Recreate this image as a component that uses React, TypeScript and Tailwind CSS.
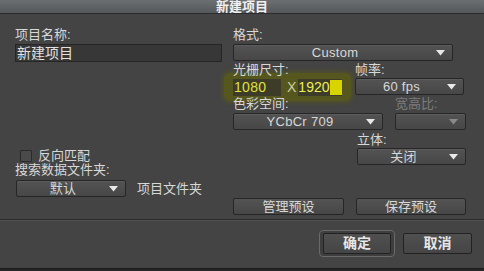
import React from "react";

const FONT = { fontFamily: '"Liberation Sans", "Noto Sans CJK SC", sans-serif' };

function Arrow({ dim = false }: { dim?: boolean }) {
  return (
    <svg width="9" height="6" viewBox="0 0 9 6" className="shrink-0">
      <path d="M0 0 H9 L4.5 5.5 Z" fill={dim ? "#8a8a8a" : "#e8e8e8"} />
    </svg>
  );
}

function Select({ text, w, dim = false }: { text?: string; w: string; dim?: boolean }) {
  return (
    <div
      className={`${w} h-[17px] flex items-center rounded-[2px] border border-[#262626] bg-gradient-to-b from-[#535353] to-[#474747] shadow-[inset_0_1px_0_#5c5c5c] pr-[7px]`}
    >
      <span className="flex-1 text-center text-[13px] leading-[15px] text-[#d8d8d8] tracking-[0.3px]">{text}</span>
      <Arrow dim={dim} />
    </div>
  );
}

function Label({ children, dim = false, className = "" }: { children: React.ReactNode; dim?: boolean; className?: string }) {
  return (
    <div className={`text-[13px] leading-[16px] ${dim ? "text-[#7c7c7c]" : "text-[#d8d8d8]"} ${className}`}>{children}</div>
  );
}

function Btn({ text, w }: { text: string; w: string }) {
  return (
    <div
      className={`${w} h-[17px] flex items-center justify-center rounded-[2px] border border-[#262626] bg-gradient-to-b from-[#535353] to-[#474747] text-[13px] leading-[15px] text-[#d8d8d8]`}
    >
      {text}
    </div>
  );
}

export default function App() {
  return (
    <div className="w-[484px] h-[271px] bg-[#444444] flex flex-col overflow-hidden" style={FONT}>
      {/* title bar */}
      <div className="h-[14px] shrink-0 bg-gradient-to-b from-[#6c6f72] to-[#55585b] border-b border-[#2c2c2c] flex items-center justify-center">
        <span className="text-[13px] leading-[13px] font-bold text-[#f0f0f0]">新建项目</span>
      </div>

      {/* body */}
      <div className="flex h-[205px] shrink-0">
        {/* left column */}
        <div className="w-[233px] shrink-0 pl-[15px] pt-[13px] flex flex-col">
          <Label>项目名称:</Label>
          <div className="mt-[1px] w-[207px] h-[18px] bg-[#373737] border border-[#262626] flex items-center pl-[1px]">
            <span className="text-[14px] leading-[16px] text-[#e2e2e2]">新建项目</span>
          </div>
          <div className="mt-[86px] flex items-center pl-[5px] gap-[6px]">
            <div className="w-[12px] h-[12px] bg-[#4a4a4a] border border-[#2a2a2a] rounded-[1px]" />
            <Label>反向匹配</Label>
          </div>
          <Label className="-mt-[2px]">搜索数据文件夹:</Label>
          <div className="mt-[2px] ml-[1px] flex items-center gap-[11px]">
            <Select text="默认" w="w-[110px]" />
            <Label>项目文件夹</Label>
          </div>
        </div>

        {/* right column */}
        <div className="w-[233px] shrink-0 pt-[13px] flex flex-col">
          <Label>格式:</Label>
          <div className="mt-[1px]">
            <Select text="Custom" w="w-[220px]" />
          </div>

          <div className="flex mt-[1px]">
            <div className="w-[122px] shrink-0 flex flex-col">
              <Label className="relative z-10">光栅尺寸:</Label>
              <div className="-ml-[9px] -mt-[5px] -mb-[6px] w-[127px] h-[28px] rounded-[6px] bg-[#56561f] shadow-[0_0_4px_2px_rgba(86,86,31,0.7)] flex items-center pl-[9px]">
                <div className="w-[48px] h-[17px] bg-[#3c3c28] flex items-center pl-[1px]">
                  <span className="text-[14px] leading-[16px] text-[#e0e03a] tracking-[0.3px]">1080</span>
                </div>
                <span className="ml-[6px] text-[14px] leading-[16px] text-[#cfcf9a]">X</span>
                <div className="ml-[2px] h-[17px] bg-[#3c3c28] flex items-center">
                  <span className="text-[14px] leading-[16px] text-[#efef50]">1920</span>
                  <div className="w-[12px] h-[15px] bg-[#d8d400]" />
                </div>
              </div>
            </div>
            <div className="flex flex-col">
              <Label>帧率:</Label>
              <div>
                <Select text="60 fps" w="w-[109px]" />
              </div>
            </div>
          </div>

          <div className="flex mt-[1px]">
            <div className="w-[162px] shrink-0 flex flex-col">
              <Label className="relative z-10">色彩空间:</Label>
              <div className="mt-[1px]">
                <Select text="YCbCr 709" w="w-[150px]" />
              </div>
            </div>
            <div className="flex flex-col">
              <Label dim>宽高比:</Label>
              <div className="mt-[1px]">
                <Select w="w-[71px]" dim />
              </div>
            </div>
          </div>

          <div className="ml-[124px] flex flex-col mt-[2px]">
            <Label>立体:</Label>
            <div>
              <Select text="关闭" w="w-[109px]" />
            </div>
          </div>

          <div className="flex gap-[12px] mt-[33px]">
            <Btn text="管理预设" w="w-[111px]" />
            <Btn text="保存预设" w="w-[110px]" />
          </div>
        </div>
      </div>

      {/* separator */}
      <div className="h-[2px] shrink-0 border-t border-[#2c2c2c] border-b border-b-[#505050]" />

      {/* footer */}
      <div className="flex-1 flex justify-end items-start pt-[9px] pr-[12px] gap-[8px]">
        <div className="w-[76px] h-[27px] rounded-[4px] border border-[#6a6a6a] bg-[#3e3e3e] flex items-center justify-center">
          <div className="w-[68px] h-[21px] rounded-[2px] border border-[#222] bg-gradient-to-b from-[#505050] to-[#454545] flex items-center justify-center text-[14px] font-bold text-[#e6e6e6]">
            确定
          </div>
        </div>
        <div className="mt-[3px] w-[69px] h-[21px] rounded-[2px] border border-[#222] bg-gradient-to-b from-[#505050] to-[#454545] flex items-center justify-center text-[14px] font-bold text-[#e6e6e6]">
          取消
        </div>
      </div>
      <div className="h-[3px] shrink-0 bg-[#262626] border-t border-[#1c1c1c]" />
    </div>
  );
}
